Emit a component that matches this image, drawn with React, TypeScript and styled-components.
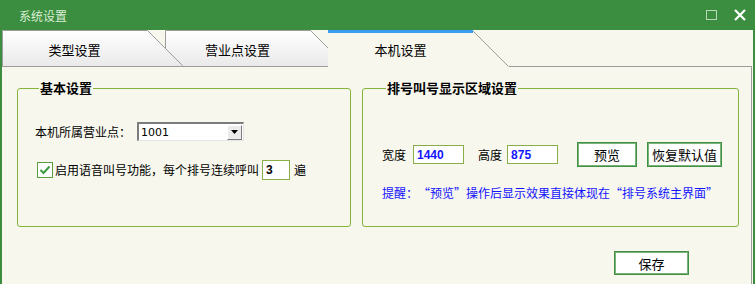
import React from 'react';
import styled, { createGlobalStyle } from 'styled-components';

const GREEN = '#3b8d3f';
const CREAM = '#f7f7ed';
const GROUP_BORDER = '#84b53a';
const TAB_BORDER = '#9c9c9c';
const CJK = '"Noto Sans CJK SC", "Noto Sans", sans-serif';

const GlobalStyle = createGlobalStyle`
    html, body {
        margin: 0;
        padding: 0;
    }
    body {
        font-family: ${CJK};
        font-size: 12px;
        color: #000;
    }
`;

const Window = styled.div`
    width: 755px;
    height: 284px;
    box-sizing: border-box;
    padding: 0 2px;
    background: ${GREEN};
    display: flex;
    flex-direction: column;
    overflow: hidden;
`;

const TitleBar = styled.div`
    height: 30px;
    flex: 0 0 30px;
    display: flex;
    align-items: center;
    padding-left: 17px;
    color: #dcefd6;
    font-size: 12px;
`;

const TitleButtons = styled.div`
    margin-left: auto;
    display: flex;
    align-items: center;
    gap: 17px;
    padding-right: 7px;
`;

const MaxIcon = styled.div`
    width: 11px;
    height: 10px;
    box-sizing: border-box;
    border: 1.5px solid #b9d9b6;
`;

const Body = styled.div`
    flex: 1;
    display: flex;
    flex-direction: column;
    background: ${CREAM};
`;

const TabRow = styled.div`
    position: relative;
    z-index: 1;
    display: flex;
    height: 37px;
    margin-bottom: -1px;
`;

const Tab = styled.div<{ layer: number }>`
    position: relative;
    flex: 0 0 163px;
    height: 37px;
    z-index: ${props => props.layer};
`;

const TabShape = styled.svg`
    position: absolute;
    left: 0;
    top: 0;
`;

const TabLabel = styled.div`
    position: relative;
    width: 145px;
    text-align: center;
    line-height: 39px;
    font-size: 13px;
`;

const Panel = styled.div`
    flex: 1;
    margin-right: 1px;
    border-top: 1px solid ${TAB_BORDER};
    border-right: 1px solid ${TAB_BORDER};
    padding: 12px 0 0 15px;
    display: flex;
    flex-direction: column;
`;

const Groups = styled.div`
    display: flex;
    gap: 11px;
`;

const Group = styled.fieldset<{ w: number }>`
    margin: 0;
    padding: 0 0 0 ${props => (props.w > 350 ? 19 : 17)}px;
    width: ${props => props.w}px;
    height: 148px;
    box-sizing: border-box;
    min-width: 0;
    border: 1px solid ${GROUP_BORDER};
    border-radius: 3px;
`;

const Legend = styled.legend`
    margin-left: 4px;
    padding: 0 1px;
    font-size: 13px;
    font-weight: bold;
    line-height: 18px;
`;

const Row = styled.div<{ top: number }>`
    display: flex;
    align-items: center;
    margin-top: ${props => props.top}px;
`;

const Label = styled.span<{ gap?: number }>`
    margin-right: ${props => props.gap ?? 0}px;
    line-height: 16px;
    white-space: nowrap;
`;

const Combo = styled.div`
    width: 107px;
    height: 19px;
    box-sizing: border-box;
    display: flex;
    align-items: center;
    background: #fff;
    border-top: 2px solid #7c7c7c;
    border-left: 2px solid #7c7c7c;
    border-right: 1px solid #e4e4e4;
    border-bottom: 1px solid #e4e4e4;
`;

const ComboValue = styled.span`
    flex: 1;
    padding-left: 2px;
    font-family: "DejaVu Sans", "Liberation Sans", sans-serif;
    font-size: 11px;
`;

const ComboArrow = styled.div`
    width: 15px;
    height: 15px;
    box-sizing: border-box;
    margin-right: 1px;
    display: flex;
    align-items: center;
    justify-content: center;
    background: #ececec;
    border-top: 1px solid #fff;
    border-left: 1px solid #fff;
    border-right: 1px solid #7c7c7c;
    border-bottom: 1px solid #7c7c7c;
`;

const CheckBox = styled.div`
    width: 16px;
    height: 16px;
    box-sizing: border-box;
    margin-left: 2px;
    margin-right: 2px;
    border: 1px solid #5c9e3e;
    background: #fff;
    display: flex;
    align-items: center;
    justify-content: center;
`;

const NumberBox = styled.div<{ w: number; h: number }>`
    width: ${props => props.w}px;
    height: ${props => props.h}px;
    box-sizing: border-box;
    border: 1px solid #8aae47;
    background: #fff;
    padding-left: 3px;
    display: flex;
    align-items: center;
    font-family: "Liberation Sans", Arial, sans-serif;
    font-weight: bold;
    font-size: 12px;
    color: ${props => (props.w > 40 ? '#1414ff' : '#000')};
`;

const ActionButton = styled.button<{ w: number; h?: number }>`
    width: ${props => props.w}px;
    height: ${props => props.h ?? 25}px;
    box-sizing: border-box;
    padding: 0;
    border: 1px solid #3f9244;
    box-shadow: inset 0 0 0 1px #7bb27a;
    background: #fff;
    font-family: ${CJK};
    font-size: 13px;
    color: #000;
`;

const Hint = styled.div`
    margin-top: 18px;
    color: #1414ff;
    line-height: 16px;
    white-space: nowrap;
`;

// full-width quote cell, like the original's SimSun rendering
const Quote = styled.span<{ open?: boolean }>`
    display: inline-block;
    width: 12px;
    text-align: ${props => (props.open ? 'right' : 'left')};
`;

const Footer = styled.div`
    display: flex;
    justify-content: flex-end;
    margin-top: 24px;
    padding-right: 62px;
`;

const tabs = [
    { label: '类型设置', layer: 2 },
    { label: '营业点设置', layer: 1 },
    { label: '本机设置', layer: 3, active: true },
];

const TabGraphic = ({ active }: { active?: boolean }) => (
    <TabShape width="181" height="37" viewBox="0 0 181 37">
        <defs>
            <linearGradient id="tabfill" x1="0" y1="0" x2="0" y2="1">
                <stop offset="0" stopColor="#ffffff" />
                <stop offset="1" stopColor="#e9e9e9" />
            </linearGradient>
        </defs>
        {active ? (
            <>
                <path d="M0 37 L0 0 L145 0 L181 36 L181 37 Z" fill={CREAM} />
                <path d="M144.5 0.5 L180.5 36.5" stroke={TAB_BORDER} fill="none" />
                <rect x="0" y="0" width="145" height="3" fill="#3c9cf2" />
            </>
        ) : (
            <path
                d="M0.5 36.5 L0.5 0.5 L145.5 0.5 L180.5 35.5 L180.5 36.5 Z"
                fill="url(#tabfill)"
                stroke={TAB_BORDER}
            />
        )}
    </TabShape>
);

export default function App() {
    return (
        <>
            <GlobalStyle />
            <Window>
                <TitleBar>
                    系统设置
                    <TitleButtons>
                        <MaxIcon />
                        <svg width="12" height="12" viewBox="0 0 12 12">
                            <path d="M1 1 L11 11 M11 1 L1 11" stroke="#fff" strokeWidth="2.2" />
                        </svg>
                    </TitleButtons>
                </TitleBar>
                <Body>
                    <TabRow>
                        {tabs.map(tab => (
                            <Tab key={tab.label} layer={tab.layer}>
                                <TabGraphic active={tab.active} />
                                <TabLabel>{tab.label}</TabLabel>
                            </Tab>
                        ))}
                    </TabRow>
                    <Panel>
                        <Groups>
                            <Group w={334}>
                                <Legend>基本设置</Legend>
                                <Row top={25}>
                                    <Label gap={6}>本机所属营业点：</Label>
                                    <Combo>
                                        <ComboValue>1001</ComboValue>
                                        <ComboArrow>
                                            <svg width="7" height="4" viewBox="0 0 7 4">
                                                <path d="M0 0 H7 L3.5 4 Z" fill="#000" />
                                            </svg>
                                        </ComboArrow>
                                    </Combo>
                                </Row>
                                <Row top={19}>
                                    <CheckBox>
                                        <svg width="12" height="12" viewBox="0 0 12 12">
                                            <path
                                                d="M1.5 6 L4.5 9 L10.5 2.5"
                                                stroke="#3a9a3e"
                                                strokeWidth="2"
                                                fill="none"
                                            />
                                        </svg>
                                    </CheckBox>
                                    <Label gap={3}>启用语音叫号功能，每个排号连续呼叫</Label>
                                    <NumberBox w={28} h={20}>3</NumberBox>
                                    <Label style={{ marginLeft: 4 }}>遍</Label>
                                </Row>
                            </Group>
                            <Group w={377}>
                                <Legend>排号叫号显示区域设置</Legend>
                                <Row top={45}>
                                    <Label gap={7}>宽度</Label>
                                    <NumberBox w={51} h={19}>1440</NumberBox>
                                    <Label gap={5} style={{ marginLeft: 14 }}>
                                        高度
                                    </Label>
                                    <NumberBox w={51} h={19}>875</NumberBox>
                                    <ActionButton w={60} style={{ marginLeft: 19 }}>
                                        预览
                                    </ActionButton>
                                    <ActionButton w={75} style={{ marginLeft: 10 }}>
                                        恢复默认值
                                    </ActionButton>
                                </Row>
                                <Hint>
                                    提醒：<Quote open>“</Quote>预览<Quote>”</Quote>
                                    操作后显示效果直接体现在<Quote open>“</Quote>排号系统主界面
                                    <Quote>”</Quote>
                                </Hint>
                            </Group>
                        </Groups>
                        <Footer>
                            <ActionButton w={75} h={24}>
                                保存
                            </ActionButton>
                        </Footer>
                    </Panel>
                </Body>
            </Window>
        </>
    );
}
